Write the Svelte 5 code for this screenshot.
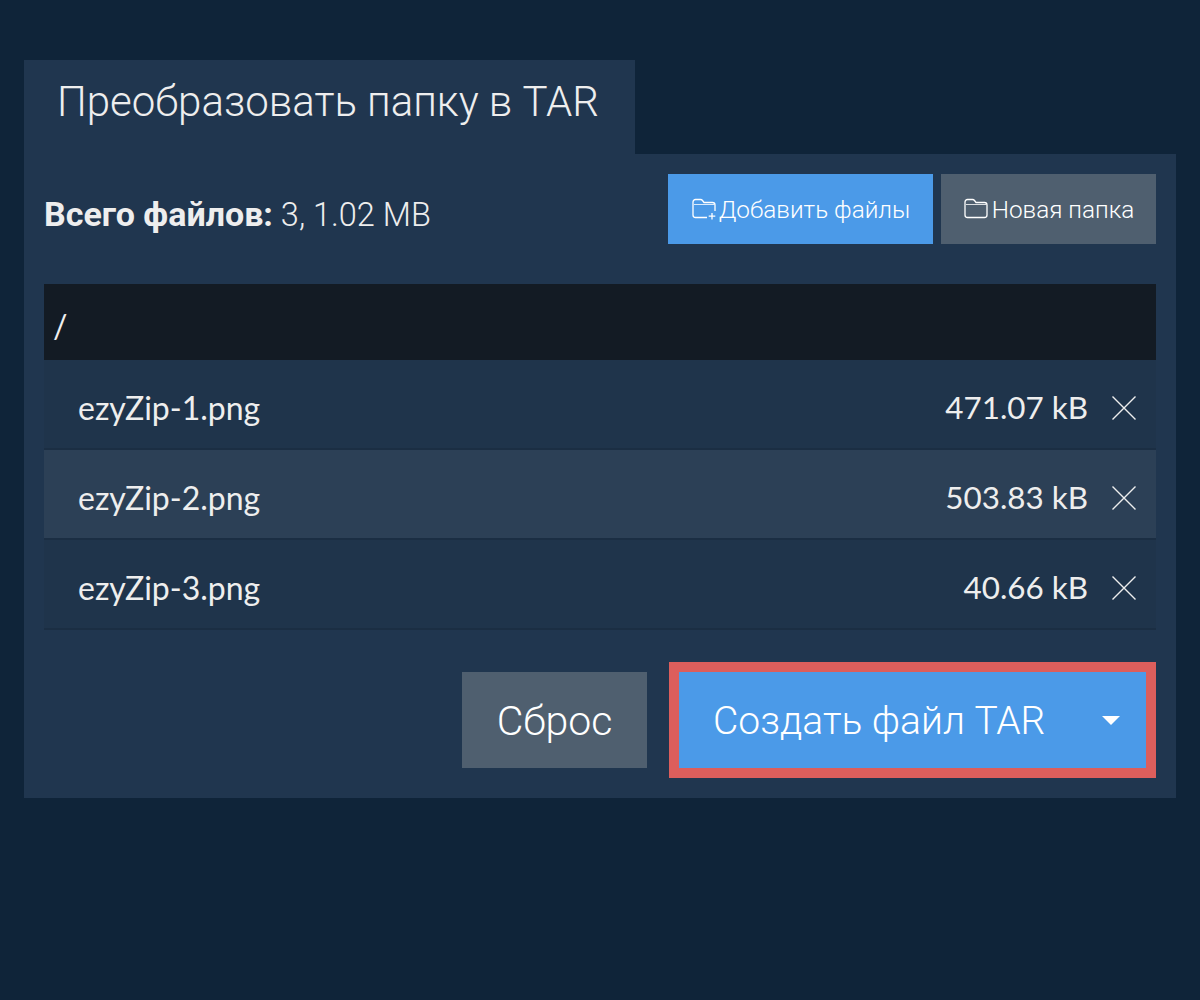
<script>
  const files = [
    { name: 'ezyZip-1.png', size: '471.07 kB' },
    { name: 'ezyZip-2.png', size: '503.83 kB' },
    { name: 'ezyZip-3.png', size: '40.66 kB' }
  ];
</script>

<main class="page">
  <h1 class="tab">Преобразовать папку в TAR</h1>
  <section class="panel">
    <div class="toolbar">
      <p class="total"><b>Всего файлов:</b> 3, 1.02 MB</p>
      <div class="actions">
        <button class="btn blue small">
          <svg width="28" height="22" viewBox="0 0 28 22" fill="none" stroke="currentColor" stroke-width="1.3">
            <path d="M16 19.5H4.5a2.5 2.5 0 0 1-2.5-2.5V4a2.5 2.5 0 0 1 2.5-2.5h5a2.5 2.5 0 0 1 2 1L13 4.5h8.5A2.5 2.5 0 0 1 24 7v6" />
            <path d="M3 6.5h20" stroke-width="0.8" />
            <path d="M21 15v6.5M17.7 18.2h6.6" />
          </svg>
          Добавить файлы
        </button>
        <button class="btn grey small">
          <svg width="26" height="22" viewBox="0 0 26 22" fill="none" stroke="currentColor" stroke-width="1.3">
            <path d="M4.5 19.5A2.5 2.5 0 0 1 2 17V4a2.5 2.5 0 0 1 2.5-2.5h5a2.5 2.5 0 0 1 2 1L13 4.5h8.5A2.5 2.5 0 0 1 24 7v10a2.5 2.5 0 0 1-2.5 2.5z" />
            <path d="M3 6.5h20" stroke-width="0.8" />
          </svg>
          Новая папка
        </button>
      </div>
    </div>

    <div class="path">/</div>
    <ul class="files">
      {#each files as file, i}
        <li class="row" class:hover={i === 1}>
          <span class="name">{file.name}</span>
          <span class="size">{file.size}</span>
          <svg class="remove" width="24" height="24" viewBox="0 0 24 24" stroke="currentColor" stroke-width="1.4">
            <path d="M0.5 0.5l23 23M23.5 0.5l-23 23" />
          </svg>
        </li>
      {/each}
    </ul>

    <div class="footer">
      <button class="btn grey big reset">Сброс</button>
      <div class="highlight">
        <button class="btn blue big create">
          <span>Создать файл TAR</span>
          <i class="caret"></i>
        </button>
      </div>
    </div>
  </section>
</main>

<style>
  :global(body) {
    background: #0f2439;
  }

  .page {
    box-sizing: border-box;
    height: 1000px;
    padding: 60px 24px 0;
    font-family: Lato, Inter, "Noto Sans", sans-serif;
    color: #eeeeee;
  }

  .tab {
    box-sizing: border-box;
    width: 611px;
    height: 94px;
    margin: 0;
    padding: 16px 0 0 33px;
    background: #20364f;
    font-family: Roboto, sans-serif;
    font-size: 42px;
    font-weight: 300;
    line-height: 52px;
    white-space: nowrap;
  }

  .panel {
    box-sizing: border-box;
    height: 644px;
    padding: 20px;
    background: #20364f;
  }

  .toolbar {
    display: flex;
    justify-content: space-between;
    align-items: center;
    height: 70px;
  }

  .total {
    margin: 10px 0 0;
    font-family: Roboto, sans-serif;
    font-size: 32.5px;
    font-weight: 300;
  }

  .total b {
    font-size: 34px;
    font-weight: 700;
  }

  .actions {
    display: flex;
    gap: 8px;
  }

  .btn {
    display: flex;
    align-items: center;
    justify-content: center;
    border: 0;
    color: #fff;
    font-family: Roboto, sans-serif;
    font-weight: 300;
  }

  .blue {
    background: #4b9ae8;
  }

  .grey {
    background: #4f5f6f;
  }

  .small {
    height: 70px;
    font-size: 24.3px;
    padding: 0;
    gap: 0;
  }

  .actions .blue {
    width: 265px;
  }

  .actions .grey {
    width: 215px;
    gap: 3px;
  }

  .path {
    box-sizing: border-box;
    height: 76px;
    margin-top: 40px;
    padding: 24px 9px 0;
    background: #131b24;
    font-size: 32px;
    line-height: 36px;
  }

  .files {
    list-style: none;
    margin: 0;
    padding: 0;
  }

  .row {
    box-sizing: border-box;
    display: flex;
    align-items: center;
    height: 90px;
    padding: 0 20px 0 34px;
    background: #1f344b;
    border-bottom: 2px solid #1b2e43;
    font-size: 32px;
  }

  .row.hover {
    background: #2c4056;
  }

  .name {
    flex: 1;
    padding-top: 6px;
  }

  .size {
    padding-top: 6px;
    font-size: 31.4px;
  }

  .remove {
    margin: 8px 0 0 24px;
  }

  .footer {
    display: flex;
    justify-content: flex-end;
    align-items: center;
    gap: 22px;
    margin-top: 32px;
  }

  .big {
    height: 96px;
    padding-top: 2px;
  }

  .reset {
    width: 185px;
    font-size: 41px;
  }

  .highlight {
    padding: 10px;
    background: #dc5e5c;
  }

  .create {
    justify-content: space-between;
    box-sizing: border-box;
    width: 467px;
    padding: 2px 26px 0 34px;
    font-size: 39px;
  }

  .caret {
    margin-bottom: 2px;
    border: 9px solid transparent;
    border-top: 9px solid #fff;
    border-bottom: 0;
  }
</style>
